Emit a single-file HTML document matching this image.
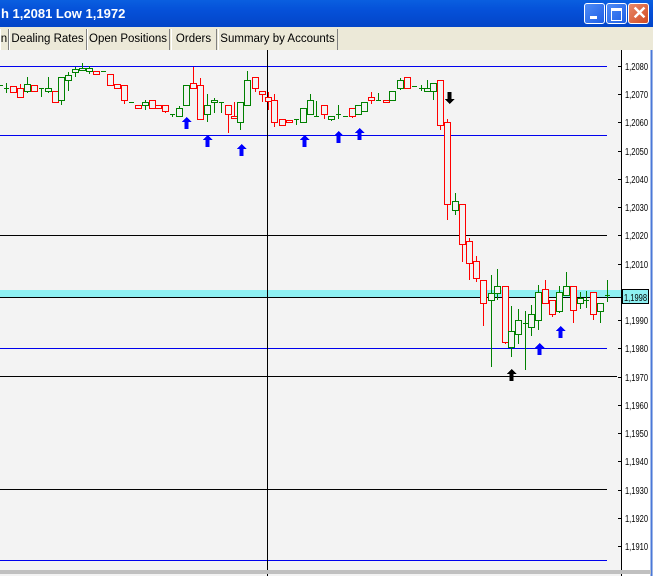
<!DOCTYPE html>
<html><head><meta charset="utf-8"><style>
html,body{margin:0;padding:0;width:653px;height:576px;overflow:hidden;background:#f3f3f3;font-family:"Liberation Sans",sans-serif}
#title{position:absolute;left:0;top:0;width:653px;height:27px;background:linear-gradient(#0a5fe0,#0550d8 40%,#0345c8);color:#fff;font-weight:bold;font-size:13px;line-height:28px}
.btn{position:absolute;top:3px;width:19px;height:19px;border:1px solid #fff;border-radius:3px;background:linear-gradient(135deg,#4f8cf6,#1d5ee6)}
#tabs{position:absolute;left:0;top:27px;width:653px;height:23px;background:#ece9d8}
.tab{position:absolute;top:2px;height:21px;font-size:11.5px;line-height:21px;color:#000;border-right:1px solid #808080;box-shadow:inset 1px 0 0 #fff;text-align:center;white-space:nowrap;overflow:hidden}
</style></head><body>
<div id="title"><span style="position:absolute;left:1px">h 1,2081 Low 1,1972</span>
<div class="btn" style="left:584px"><div style="position:absolute;left:5px;top:12px;width:7px;height:3px;background:#fff"></div></div>
<div class="btn" style="left:606px"><div style="position:absolute;left:4px;top:4px;width:9px;height:9px;border:1px solid #fff;border-top-width:3px"></div></div>
<div class="btn" style="left:628px;background:linear-gradient(135deg,#e88a6a,#d24a22)"><span style="position:absolute;left:3px;top:-5px;font-size:18px;font-weight:bold;color:#fff">✕</span></div>
</div>
<div id="tabs">
<div class="tab" style="left:0;width:8px">n</div>
<div class="tab" style="left:9px;width:77px">Dealing Rates</div>
<div class="tab" style="left:87px;width:82px">Open Positions</div>
<div class="tab" style="left:171px;width:45px">Orders</div>
<div class="tab" style="left:218px;width:119px">Summary by Accounts</div>
</div>
<svg id="c" width="653" height="526" viewBox="0 50 653 526" style="position:absolute;left:0;top:50px" shape-rendering="crispEdges">
<rect x="622" y="50" width="29" height="526" fill="#fff"/>
<rect x="0" y="290" width="622" height="7" fill="#8ef0f2"/>
<g stroke-width="1">
<line x1="0" y1="66.5" x2="607" y2="66.5" stroke="#0000ee"/>
<line x1="0" y1="135.5" x2="607" y2="135.5" stroke="#0000ee"/>
<line x1="0" y1="235.5" x2="607" y2="235.5" stroke="#000"/>
<line x1="0" y1="297.5" x2="622" y2="297.5" stroke="#000"/>
<line x1="0" y1="348.5" x2="607" y2="348.5" stroke="#0000ee"/>
<line x1="0" y1="376.5" x2="617" y2="376.5" stroke="#000"/>
<line x1="0" y1="489.5" x2="607" y2="489.5" stroke="#000"/>
<line x1="0" y1="560.5" x2="607" y2="560.5" stroke="#0000ee"/>
<line x1="267.5" y1="50" x2="267.5" y2="576" stroke="#000"/>
<line x1="621.5" y1="50" x2="621.5" y2="576" stroke="#000"/>
<line x1="651.5" y1="50" x2="651.5" y2="576" stroke="#4a78d8" stroke-width="2"/>
</g>
<rect x="0" y="570" width="651" height="4" fill="#c0c0c0"/>
<g id="cd"></g>
<g id="ax" font-size="10" font-family="Liberation Sans,sans-serif" fill="#000"></g>
<rect x="622.5" y="289.5" width="26" height="14" fill="#8ef0f2" stroke="#000"/>
<text x="624" y="301" font-size="10" font-family="Liberation Sans,sans-serif" textLength="23" lengthAdjust="spacingAndGlyphs">1,1998</text>
</svg>
<script>
var L=['1,2080','1,2070','1,2060','1,2050','1,2040','1,2030','1,2020','1,2010',null,'1,1990','1,1980','1,1970','1,1960','1,1950','1,1940','1,1930','1,1920','1,1910'];
var a='';L.forEach(function(t,i){if(!t)return;var y=66+i*28.24;a+='<line x1="618" y1="'+(Math.round(y)+.5)+'" x2="622" y2="'+(Math.round(y)+.5)+'" stroke="#000"/><text x="625" y="'+Math.round(y+4)+'" textLength="23" lengthAdjust="spacingAndGlyphs">'+t+'</text>';});
document.getElementById('ax').innerHTML=a;
var C=[[0,85,85,85,85,'g'],[6,83,93,88,88,'g'],[13,86,92,86,92,'r'],[20,84,97,88,97,'r'],[27,77,93,91,84,'g'],[34,85,91,85,91,'r'],[41,88,97,88,88,'g'],[48,77,93,91,88,'g'],[55,91,102,91,102,'r'],[61,77,105,100,77,'g'],[68,72,91,80,75,'g'],[75,67,77,72,69,'g'],[82,63,71,70,68,'g'],[89,66,74,71,68,'g'],[96,71,74,71,74,'r'],[103,71,71,71,71,'g'],[110,74,85,74,85,'r'],[117,84,88,84,88,'r'],[124,85,104,85,100,'r'],[131,102,102,102,102,'g'],[138,105,108,105,108,'r'],[145,100,110,105,102,'g'],[152,100,108,100,108,'r'],[158,105,108,105,108,'r'],[165,105,113,105,111,'r'],[172,114,117,114,114,'g'],[179,106,116,116,108,'g'],[186,85,105,105,85,'g'],[193,67,88,83,88,'r'],[200,78,119,85,119,'r'],[207,94,122,114,105,'g'],[214,98,113,102,100,'g'],[221,102,113,102,102,'g'],[228,105,133,105,114,'r'],[234,102,118,116,118,'r'],[240,102,130,122,102,'g'],[247,71,105,105,80,'g'],[255,77,92,77,88,'r'],[262,91,102,91,94,'r'],[268,92,110,97,101,'r'],[274,94,127,100,122,'r'],[282,119,126,119,125,'r'],[289,120,122,120,122,'r'],[296,119,125,119,119,'g'],[303,108,122,122,108,'g'],[310,94,114,114,100,'g'],[316,101,116,116,116,'g'],[324,105,119,105,114,'r'],[331,116,121,119,116,'g'],[338,105,119,114,114,'g'],[345,116,116,116,116,'g'],[352,108,118,108,116,'r'],[358,105,114,114,105,'g'],[364,102,111,111,102,'g'],[371,92,104,97,100,'r'],[378,93,100,100,100,'g'],[386,100,102,100,102,'r'],[392,91,100,100,91,'g'],[400,78,90,88,80,'g'],[407,77,88,77,88,'r'],[414,86,86,86,86,'g'],[421,85,91,88,88,'g'],[427,80,91,91,88,'g'],[433,83,100,91,83,'g'],[440,80,130,80,125,'r'],[447,119,220,122,204,'r'],[455,193,215,210,201,'g'],[462,204,262,204,244,'r'],[469,238,280,241,263,'r'],[476,256,282,261,278,'r'],[483,280,326,280,303,'r'],[491,275,367,300,293,'g'],[497,269,300,293,286,'g'],[505,286,344,286,342,'r'],[511,306,357,347,331,'g'],[518,309,344,334,320,'g'],[525,311,370,323,323,'g'],[531,305,336,327,314,'g'],[538,285,330,320,292,'g'],[545,280,303,289,303,'r'],[552,300,317,300,314,'r'],[559,286,313,311,292,'g'],[566,272,295,295,286,'g'],[573,286,323,286,310,'r'],[580,292,309,303,298,'g'],[586,291,308,300,300,'g'],[593,292,320,292,314,'r'],[600,303,323,311,303,'g'],[607,280,302,295,295,'g']];
var s='';
C.forEach(function(c){var x=c[0],col=c[5]=='g'?'#008000':'#ff0000';
s+='<line x1="'+(x+.5)+'" y1="'+c[1]+'" x2="'+(x+.5)+'" y2="'+c[2]+'" stroke="'+col+'"/>';
var t=Math.min(c[3],c[4]),b=Math.max(c[3],c[4]);
if(b-t<1)s+='<line x1="'+(x-2)+'" y1="'+(t+.5)+'" x2="'+(x+3)+'" y2="'+(t+.5)+'" stroke="'+col+'"/>';
else s+='<rect x="'+(x-2.5)+'" y="'+(t+.5)+'" width="6" height="'+(b-t)+'" fill="#f3f3f3" stroke="'+col+'" stroke-width="1.3"/>';});
function up(x,y,col){return '<path d="M'+x+' '+(y-6)+' l5 5 h-3 v7 h-4 v-7 h-3z" fill="'+col+'"/>';}
[[186,123],[207,141],[241,150],[304,141],[338,137],[359,134],[539,349],[560,332]].forEach(function(a){s+=up(a[0]+.5,a[1],'#0000ff');});
s+=up(511.5,375,'#000');
s+='<path d="M449.5 104 l5 -5 h-3 v-7 h-4 v7 h-3z" fill="#000"/>';
document.getElementById('cd').innerHTML=s;
</script>
</body></html>
